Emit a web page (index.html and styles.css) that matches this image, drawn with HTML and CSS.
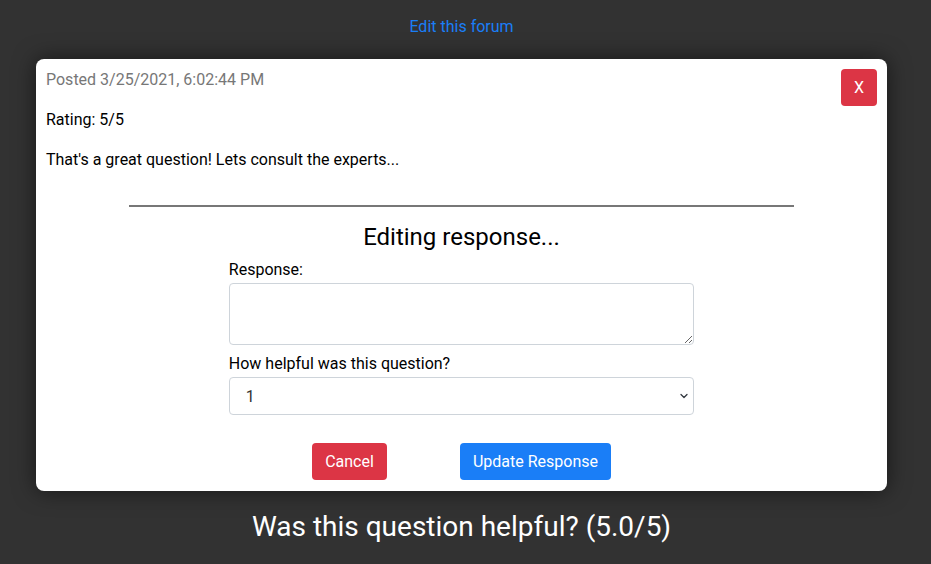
FILE: index.html
```html
<!DOCTYPE html>
<html>
<head>
<meta charset="utf-8">
<link rel="stylesheet" href="styles.css">
</head>
<body>
<div class="page">
  <div class="top">
    <a class="edit-link" href="#">Edit this forum</a>
  </div>
  <div class="card">
    <div class="card-head">
      <p class="posted">Posted 3/25/2021, 6:02:44 PM</p>
      <button class="btn btn-close">X</button>
    </div>
    <p class="line">Rating: 5/5</p>
    <p class="line">That's a great question! Lets consult the experts...</p>
    <div class="edit-wrap">
      <hr class="rule">
      <h2 class="edit-title">Editing response...</h2>
      <form class="edit-form">
        <label class="lbl">Response:</label>
        <textarea class="field textarea"></textarea>
        <label class="lbl lbl-2">How helpful was this question?</label>
        <div class="select-wrap">
          <select class="field select">
            <option>1</option>
            <option>2</option>
            <option>3</option>
            <option>4</option>
            <option>5</option>
          </select>
          <svg class="chev" width="10" height="8" viewBox="0 0 16 16"><path d="M2 5l6 6 6-6" fill="none" stroke="#343a40" stroke-width="2.6" stroke-linecap="round" stroke-linejoin="round"/></svg>
        </div>
        <div class="actions">
          <button type="button" class="btn btn-danger">Cancel</button>
          <button type="button" class="btn btn-primary">Update Response</button>
        </div>
      </form>
    </div>
  </div>
  <div class="bottom">Was this question helpful? (5.0/5)</div>
</div>
</body>
</html>
```

FILE: styles.css
```css
html, body {
  margin: 0;
  padding: 0;
  background: #323232;
  font-family: Roboto, "Liberation Sans", Arial, sans-serif;
  color: #000;
}
.page {
  width: 923px;
  display: flex;
  flex-direction: column;
}
.top {
  height: 59px;
  display: flex;
  justify-content: center;
  align-items: flex-start;
}
.edit-link {
  margin-top: 15px;
  color: #1a7ef7;
  text-decoration: none;
  font-size: 16px;
  line-height: 24px;
}
.card {
  margin: 0 36px;
  background: #fff;
  border-radius: 8px;
  box-shadow: 0 0 22px rgba(0, 0, 0, 0.55);
  padding: 9px 10px 11px 10px;
}
.card-head {
  display: flex;
  justify-content: space-between;
  align-items: flex-start;
  height: 24px;
}
.posted {
  margin: 0;
  color: #777;
  font-size: 16px;
  line-height: 24px;
}
.line {
  margin: 16px 0 0 0;
  font-size: 16px;
  line-height: 24px;
}
.btn {
  font-family: Roboto, "Liberation Sans", Arial, sans-serif;
  font-size: 16px;
  line-height: 24px;
  border: none;
  border-radius: 4px;
  color: #fff;
  padding: 6px 0;
  height: 37px;
  cursor: pointer;
  white-space: nowrap;
}
.btn-close {
  margin-top: 1px;
  background: #dc3545;
  width: 36px;
  height: 37px;
  padding: 0;
  flex-shrink: 0;
}
.btn-danger {
  background: #dc3545;
  width: 75px;
}
.btn-primary {
  background: #1a7ef7;
  width: 151px;
}
.edit-wrap {
  width: 80%;
  margin: 0 auto;
  padding-top: 17px;
}
.rule {
  margin: 16px 0 0 0;
  border: none;
  border-top: 2px solid #777;
  height: 0;
}
.edit-title {
  margin: 16px 0 0 0;
  text-align: center;
  font-weight: 400;
  font-size: 24px;
  line-height: 29px;
}
.edit-form {
  width: 70%;
  margin: 6px auto 0 auto;
  display: flex;
  flex-direction: column;
}
.lbl {
  font-size: 16px;
  line-height: 24px;
  margin-bottom: 1px;
}
.lbl-2 {
  margin-top: 7px;
}
.field {
  box-sizing: border-box;
  width: 100%;
  border: 1px solid #ced4da;
  border-radius: 4px;
  background: #fff;
  font-family: Roboto, "Liberation Sans", Arial, sans-serif;
  font-size: 16px;
}
.textarea {
  height: 62px;
  resize: vertical;
  display: block;
}
.select-wrap {
  position: relative;
}
.select {
  -webkit-appearance: none;
  appearance: none;
  height: 38px;
  padding: 0 16px;
  color: #333;
  display: block;
}
.chev {
  position: absolute;
  right: 5px;
  top: 15px;
  pointer-events: none;
}
.actions {
  display: flex;
  justify-content: center;
  gap: 73px;
  margin-top: 28px;
}
.bottom {
  text-align: center;
  color: #fff;
  font-size: 28px;
  line-height: 34px;
  margin-top: 19px;
}
```
